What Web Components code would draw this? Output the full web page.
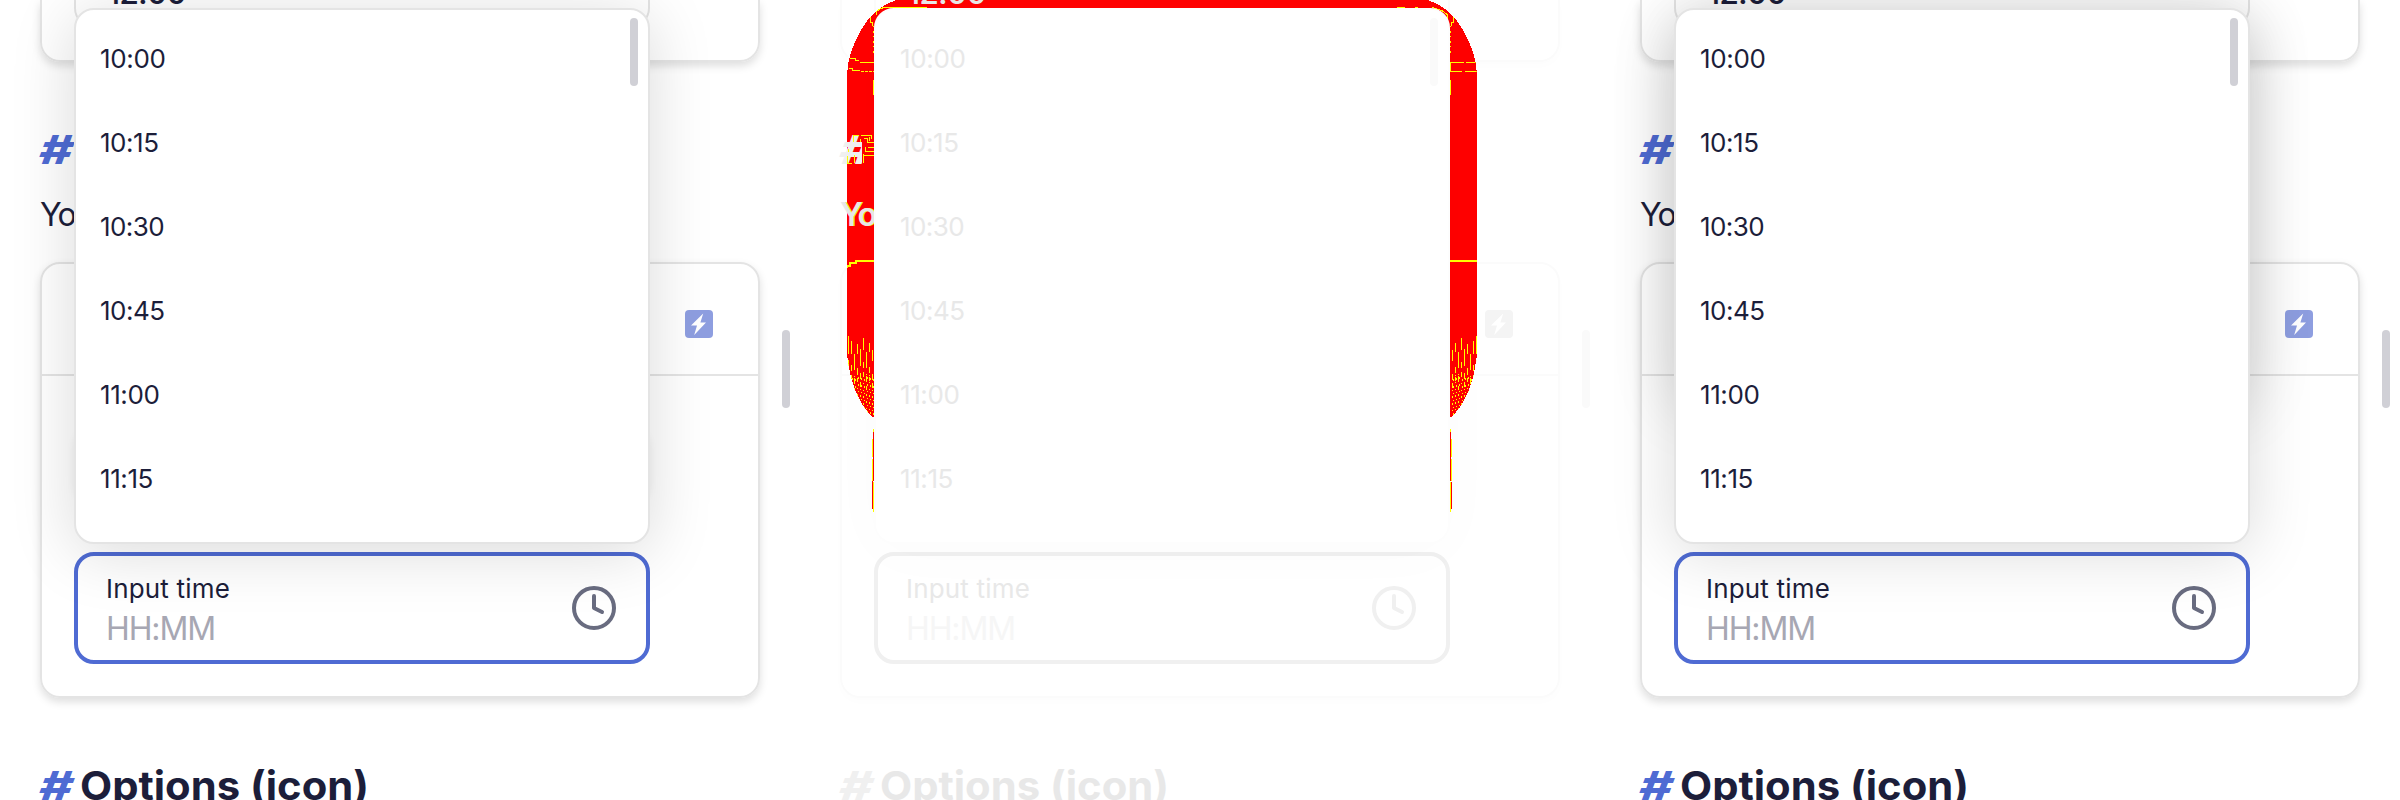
<!DOCTYPE html>
<html lang="en">
<head>
<meta charset="utf-8">
<title>Time picker comparison</title>
<style>
html,body{margin:0;height:100%;overflow:hidden;background:#fff}
body{font-family:Inter,"Open Sans",sans-serif}
</style>
</head>
<body>
<compare-board>
  <time-pane kind="before"></time-pane>
  <time-pane kind="diff"></time-pane>
  <time-pane kind="after"></time-pane>
</compare-board>
<script>
class Base extends HTMLElement{
  constructor(){super();this.attachShadow({mode:'open'}).innerHTML=this.view()}
}
customElements.define('compare-board',class extends Base{
  view(){return `<style>:host{display:grid;grid-template-columns:repeat(3,800px);height:800px;overflow:hidden}</style><slot></slot>`}
});

/* Text run whose advance equals the given width: tracked, or stretched. */
customElements.define('fit-text',class extends Base{
  view(){return `<style>:host{display:inline-block;white-space:pre;transform-origin:0 50%}</style><slot></slot>`}
  connectedCallback(){
    const w=+this.getAttribute('w'), natural=this.getBoundingClientRect().width, skew=this.getAttribute('skew')||0;
    if(this.hasAttribute('stretch'))this.style.transform=`skewX(${skew}deg) scaleX(${(w/natural).toFixed(4)})`;
    else this.style.letterSpacing=((w-natural)/this.textContent.length).toFixed(3)+'px';
  }
});

customElements.define('doc-heading',class extends Base{
  view(){return `<style>
  :host{display:flex;flex:none;align-items:center;height:48px;position:relative;z-index:2;font-size:40px;font-weight:700;line-height:48px;color:var(--ink)}
  b{width:40px;flex:none;color:var(--blue);font-weight:800}
  </style><b><fit-text w="34" skew="-9" stretch>#</fit-text></b><slot></slot>`}
});

customElements.define('doc-card',class extends Base{
  view(){return `<style>
  :host{display:flex;flex:none;flex-direction:column;box-sizing:border-box;width:720px;height:436px;border:2px solid var(--line);border-radius:20px;box-shadow:0 4px 8px var(--card-shade)}
  :host([cut]){height:62px;border-top:0;border-radius:0 0 20px 20px}
  :host([cut]) header{display:none}
  header{display:flex;flex:none;align-items:center;justify-content:flex-end;height:110px;border-bottom:2px solid var(--line);padding-right:45px}
  section{flex:1;display:flex;flex-direction:column;justify-content:flex-end;padding:0 32px 32px}
  header svg{display:block;margin-top:10px}
  :host([cut]) section{justify-content:flex-start;padding-bottom:0}
  </style><header><svg width="28" height="28" viewBox="0 0 28 28"><rect width="28" height="28" rx="4" fill="var(--badge)"/><path d="M18.200 3.500 6 15.600h6L9.200 25 21 12.600h-5.600z" fill="var(--bolt)"/></svg></header><section><slot></slot></section>`}
});

customElements.define('time-field',class extends Base{
  view(){return `<style>
  :host{display:flex;flex:none;position:relative;box-sizing:border-box;width:576px;height:112px;border:4px solid var(--blue);border-radius:20px;padding:0 30px 0 28px;align-items:center;justify-content:space-between}
  .copy{display:flex;flex-direction:column;margin-top:5px}
  .label{font-size:26px;line-height:32px;height:36px;color:var(--ink)}
  .hint{font-size:32px;line-height:40px;height:40px;color:var(--hint)}
  .halo{position:absolute;z-index:2;left:-4px;bottom:var(--halo-bottom);width:576px;height:var(--halo-height);border-radius:20px;box-shadow:var(--halo-shade)}
  </style><div class="copy"><div class="label"><fit-text w="124">Input time</fit-text></div><div class="hint"><fit-text w="109">HH:MM</fit-text></div></div>
  <svg width="44" height="44" viewBox="0 0 44 44" fill="none" stroke="var(--icon)" stroke-width="4" stroke-linecap="round" stroke-linejoin="round"><circle cx="22" cy="22" r="20"/><path d="M22 10v12l8 4"/></svg><div class="halo"></div><slot></slot>`}
});

customElements.define('filled-field',class extends Base{
  view(){return `<style>
  :host{display:flex;flex:none;box-sizing:border-box;width:576px;height:28px;border:2px solid var(--line);border-top:0;border-radius:0 0 20px 20px;padding-left:31px;align-items:flex-start}
  span{position:relative;z-index:2;margin-top:-27px;font-size:32px;line-height:40px;color:var(--ink);font-weight:500}
  </style><span><fit-text w="79">12:00</fit-text></span>`}
});

customElements.define('time-list',class extends Base{
  view(){return `<style>
  :host{display:block;position:absolute;z-index:3;left:-4px;bottom:116px;box-sizing:border-box;width:576px;height:536px;border:2px solid var(--pop-line);border-radius:20px;background:#fff;box-shadow:var(--pop-shade)}
  .clip{height:100%;overflow:hidden;padding:6px 24px 0;box-sizing:border-box}
  .row{height:84px;display:flex;align-items:center;font-size:26px;color:var(--ink)}
  i{position:absolute;right:10px;top:8px;width:8px;height:68px;border-radius:4px;background:var(--thumb)}
  </style><div class="clip">${[['10:00',65.5],['10:15',58.5],['10:30',64],['10:45',64.5],['11:00',59.5],['11:15',53]].map(([t,w])=>`<div class="row"><fit-text w="${w}">${t}</fit-text></div>`).join('')}</div><i></i>`}
});

/* Changed pixels in red, anti-aliased ones in yellow. */
customElements.define('diff-mask',class extends Base{
  view(){
    const shape='M96 0C80 6 70 14 61 30C53 44 47 60 47 76V355C50 383 58 403 72 417H652C666 403 674 383 677 355V76C677 60 671 44 663 30C654 14 644 6 628 0Z';
    let specks='';
    const seeds=[0,2.3,9,4,6.5,1,8,3.4,7];
    for(let s=0;s<2;s++)for(let i=0;i<9;i++){
      const x=s?676-i*3:48+i*3, y=336+seeds[i]*2;
      specks+=`M${x+.5} ${y}v${9+seeds[(i+2)%9]}M${x+.5} ${y+24}v6M${x+.5} ${y+34}v4`;
      for(let j=0;j<13;j++)specks+=`M${x+(j%2)+.5} ${374+j*3.4+(i%3)}v1.3`;
    }
    return `<style>:host{position:absolute;inset:0;z-index:1}svg{display:block}</style>
  <svg width="800" height="800" viewBox="0 0 800 800" shape-rendering="crispEdges"><clipPath id="c"><path d="${shape}"/></clipPath>
  <path d="${shape}" fill="#f00"/>
  <g clip-path="url(#c)" fill="none" stroke="#ff0"><path d="${specks}"/>
  <path d="M50 58.500h5v2h4M60 62.500h14M49 68.500h3v2h8M650 62.500h14M666 62.500h10M650 71.500h12M665 71.500h13"/>
  <path d="M61 71.500h13" stroke-dasharray="3 1"/>
  <path d="M47 268v-2h3v-3h6v-2h18M650 261h28" stroke-width="2"/>
  <path d="M73.500 26v30" stroke-dasharray="1 4 2 3"/><path d="M650.500 26v30" stroke-dasharray="1 4 2 3"/><path d="M73.500 80v15M650.500 62v10M650.500 80v15M70.500 17v5h2v4M653.500 17v5h-2v4"/></g>
  <path d="M76 15v-3l4-3 5-2h18M103 7.500h24M597 7.500h8M615 7.500h3M632 7.500l10 3 5 4v8" stroke="#ff0" fill="none"/>
  <path d="M73.500 432v37M72.500 469v13M73.500 458v23M72.500 482v27M650.500 432v49M651.500 482v27" stroke="#f00"/>
  <path d="M73.500 429v3M72.500 439v18M72.500 459v22M73.500 482v30M650.500 429v3M651.500 439v18M651.500 459v22M650.500 482v30" stroke="#ff0"/></svg>`}
});
/* Red and yellow pieces that sit on top of the light hash sign. */
customElements.define('glyph-contours',class extends Base{
  view(){return `<style>:host{position:absolute;left:0;top:0;z-index:2;height:240px;overflow:hidden}svg{display:block}</style>
  <svg width="74" height="240" viewBox="0 0 74 240" shape-rendering="crispEdges" fill="none" stroke="#ff0"><path fill="#f00" stroke="none" d="M62 134h12v31H62z"/><path d="M53.500 142v-7h5M61 135.500h10v3M64 138.500h3v4M69.500 137v4M60.500 139v3M67 142.500h7M65.500 147v4h8M68 147.500h6M63.500 154v9M64 155.500h10M47.500 156v7h4M54.500 155v8M48.500 148.500v3"/></svg>`}
});

customElements.define('time-pane',class extends Base{
  view(){
    const diff=this.getAttribute('kind')==='diff';
    return `<style>
  :host{display:flex;flex-direction:column;box-sizing:border-box;position:relative;width:800px;height:800px;overflow:hidden;padding-left:40px;isolation:isolate;
   --ink:#1c1e3a;--blue:#4f6bd3;--line:#e4e4e4;--pop-line:#e4e4e4;--card-shade:rgba(0,0,0,.13);--badge:#8e9ee0;--bolt:#fff;--hint:#a7a7b3;--icon:#696c80;--thumb:#d0d0d6;
   --pop-shade:0 8px 64px rgba(0,0,0,.15);
   --halo-bottom:156px;--halo-height:76px;--halo-shade:0 0 8px rgba(0,0,0,.06)}
  :host([kind=after]){--halo-bottom:252px;--halo-height:386px;--halo-shade:0 0 64px rgba(0,0,0,.14)}
  :host([kind=diff]){--ink:#e8e8e8;--blue:#f0f0f0;--line:#fbfbfb;--pop-line:#fdfdfd;--card-shade:rgba(0,0,0,.013);--badge:#f4f4f4;--bolt:#fff;--hint:#f6f6f6;--icon:#f0f0f0;--thumb:#fafafa;--pop-shade:0 8px 64px rgba(0,0,0,.018);--halo-shade:none}
  doc-heading{margin-top:64px}
  p{flex:none;position:relative;z-index:2;margin:21px 0 0;font-size:32px;line-height:40px;height:40px;color:var(--ink);width:34px;white-space:nowrap}
  :host([kind=diff]) p{font-weight:600;text-shadow:1px 0 #ff0}
  doc-card[main]{margin-top:27px}
  i{position:absolute;left:782px;top:330px;width:8px;height:78px;border-radius:4px;background:var(--thumb)}
  </style>
  <doc-card cut><filled-field></filled-field></doc-card>
  <doc-heading></doc-heading>
  <p><fit-text w="35">Yo</fit-text></p>
  <doc-card main><time-field><time-list></time-list></time-field></doc-card>
  <doc-heading><fit-text w="289" stretch>Options (icon)</fit-text></doc-heading>
  <i></i>${diff?'<diff-mask></diff-mask><glyph-contours></glyph-contours>':''}`}
});
</script>
</body>
</html>
